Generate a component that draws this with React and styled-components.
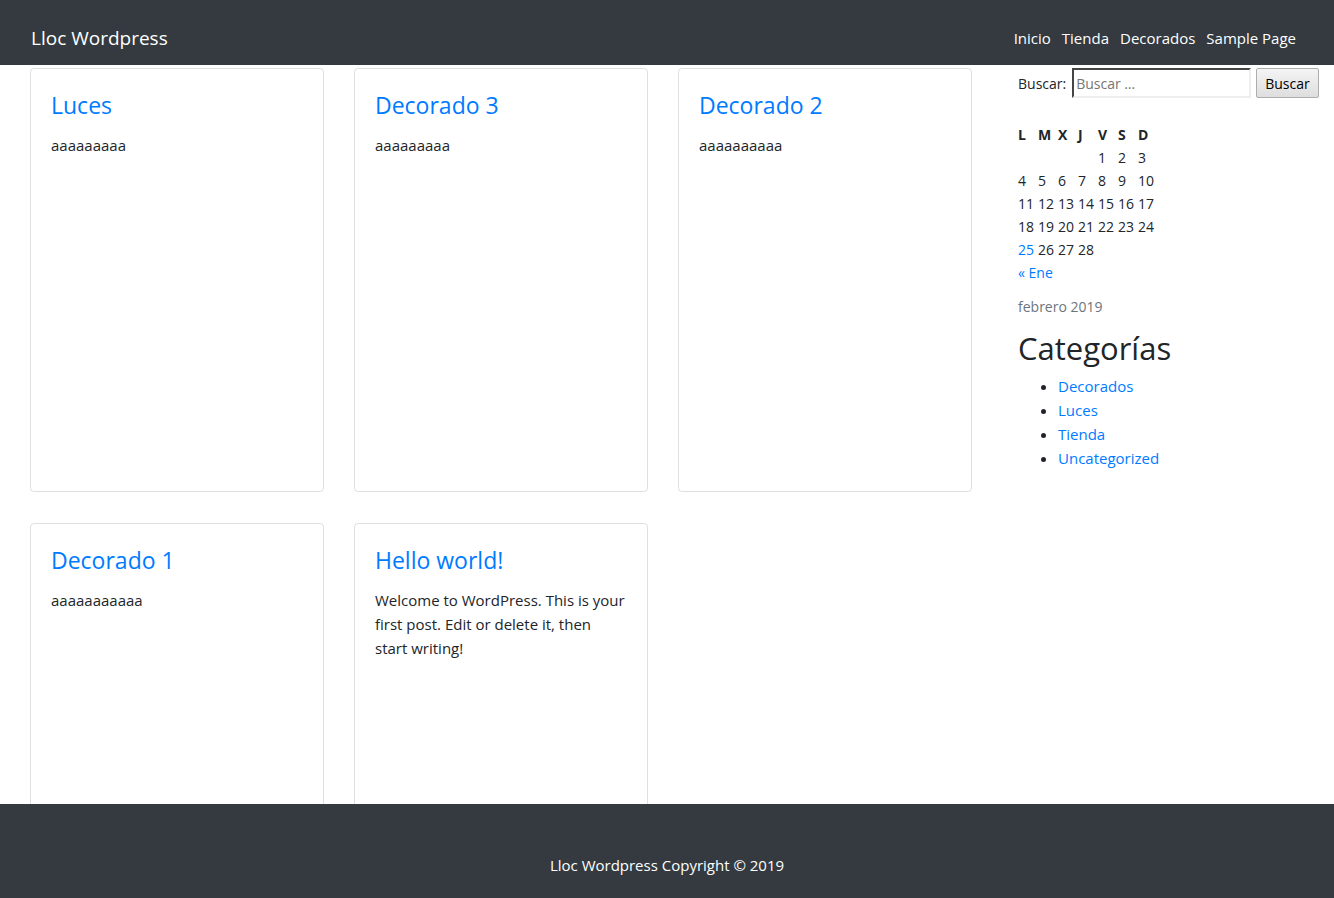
import React from "react";
import styled, { createGlobalStyle } from "styled-components";

const GlobalStyle = createGlobalStyle`
  body {
    margin: 0;
    font-family: "Open Sans", "Noto Sans", sans-serif;
    font-size: 15px;
    line-height: 1.5;
    color: #212529;
    background: #fff;
  }
  a {
    color: #007bff;
    text-decoration: none;
  }
`;

const posts = [
  { title: "Luces", text: "aaaaaaaaa" },
  { title: "Decorado 3", text: "aaaaaaaaa" },
  { title: "Decorado 2", text: "aaaaaaaaaa" },
  { title: "Decorado 1", text: "aaaaaaaaaaa" },
  {
    title: "Hello world!",
    text: "Welcome to WordPress. This is your first post. Edit or delete it, then start writing!",
  },
];

const weeks = [
  ["", "", "", "", "1", "2", "3"],
  ["4", "5", "6", "7", "8", "9", "10"],
  ["11", "12", "13", "14", "15", "16", "17"],
  ["18", "19", "20", "21", "22", "23", "24"],
  ["25", "26", "27", "28", "", "", ""],
];

const App = () => {
  return (
    <>
      <GlobalStyle />
      <Navbar>
        <Brand href="#">Lloc Wordpress</Brand>
        <NavLinks>
          <NavLink href="#">Inicio</NavLink>
          <NavLink href="#">Tienda</NavLink>
          <NavLink href="#">Decorados</NavLink>
          <NavLink href="#">Sample Page</NavLink>
        </NavLinks>
      </Navbar>

      <Page>
        <Posts>
          {posts.map((p) => (
            <Card key={p.title}>
              <CardTitle href="#">{p.title}</CardTitle>
              <CardText>{p.text}</CardText>
            </Card>
          ))}
        </Posts>

        <Sidebar>
          <SearchForm>
            <SearchLabel>Buscar:</SearchLabel>
            <SearchInput placeholder="Buscar …" />
            <SearchButton>Buscar</SearchButton>
          </SearchForm>

          <Calendar>
            <thead>
              <tr>
                {["L", "M", "X", "J", "V", "S", "D"].map((d) => (
                  <Th key={d}>{d}</Th>
                ))}
              </tr>
            </thead>
            <tbody>
              {weeks.map((w, i) => (
                <tr key={i}>
                  {w.map((d, j) => (
                    <Td key={j}>
                      {d === "25" ? <a href="#">{d}</a> : d}
                    </Td>
                  ))}
                </tr>
              ))}
              <tr>
                <Td colSpan={7}>
                  <a href="#">« Ene</a>
                </Td>
              </tr>
            </tbody>
            <Caption>febrero 2019</Caption>
          </Calendar>

          <WidgetTitle>Categorías</WidgetTitle>
          <CatList>
            <li><a href="#">Decorados</a></li>
            <li><a href="#">Luces</a></li>
            <li><a href="#">Tienda</a></li>
            <li><a href="#">Uncategorized</a></li>
          </CatList>
        </Sidebar>
      </Page>

      <Footer>Lloc Wordpress Copyright © 2019</Footer>
    </>
  );
};

export default App;

const Navbar = styled.nav`
  position: fixed;
  top: 0;
  left: 0;
  right: 0;
  height: 65px;
  background: #343a40;
  display: flex;
  align-items: center;
  justify-content: space-between;
  padding: 0 38px 0 31px;
  box-sizing: border-box;
  z-index: 10;
`;

const Brand = styled.a`
  color: #fff !important;
  font-size: 19px;
  padding-top: 12px;
`;

const NavLinks = styled.div`
  display: flex;
  gap: 11px;
  padding-top: 12px;
`;

const NavLink = styled.a`
  color: #fff !important;
  font-size: 15px;
`;

const Page = styled.div`
  display: flex;
  padding: 68px 16px 0 30px;
`;

const Posts = styled.div`
  display: grid;
  grid-template-columns: repeat(3, 294px);
  column-gap: 30px;
  row-gap: 31px;
  align-content: start;
  width: 943px;
`;

const Card = styled.div`
  border: 1px solid rgba(0, 0, 0, 0.125);
  border-radius: 4px;
  min-height: 424px;
  padding: 23px 20px 18px;
  box-sizing: border-box;
`;

const CardTitle = styled.a`
  display: block;
  font-size: 23px;
  line-height: 1.2;
  font-weight: 500;
  margin-bottom: 13px;
`;

const CardText = styled.p`
  margin: 0;
  font-size: 15px;
  line-height: 24px;
`;

const Sidebar = styled.aside`
  margin-left: 46px;
  width: 302px;
`;

const SearchForm = styled.form`
  display: flex;
  align-items: center;
  height: 30px;
`;

const SearchLabel = styled.label`
  font-size: 14px;
  margin-right: 6px;
`;

const SearchInput = styled.input`
  width: 179px;
  height: 30px;
  box-sizing: border-box;
  border: 2px inset #eee;
  border-top-color: #999;
  border-left-color: #999;
  font-family: inherit;
  font-size: 14px;
  padding: 1px 2px;
  &::placeholder {
    color: #757575;
  }
`;

const SearchButton = styled.button`
  margin-left: 5px;
  height: 30px;
  padding: 0 8px;
  font-family: inherit;
  font-size: 14px;
  color: #000;
  background: linear-gradient(#f4f4f4, #dedede);
  border: 1px solid #adadad;
  border-radius: 2px;
`;

const Calendar = styled.table`
  margin-top: 25px;
  border-collapse: collapse;
  caption-side: bottom;
`;

const Th = styled.th`
  width: 20px;
  padding: 0;
  text-align: left;
  font-size: 14px;
  line-height: 23px;
  font-weight: 700;
`;

const Td = styled.td`
  padding: 0;
  text-align: left;
  font-size: 14px;
  line-height: 23px;
`;

const Caption = styled.caption`
  text-align: left;
  color: #6c757d;
  font-size: 14px;
  padding-top: 12px;
`;

const WidgetTitle = styled.h2`
  margin: 13px 0 7px;
  font-size: 31px;
  font-weight: 500;
  line-height: 1.2;
`;

const CatList = styled.ul`
  margin: 0;
  padding-left: 40px;
  font-size: 15px;
  line-height: 24px;
`;

const Footer = styled.footer`
  position: fixed;
  left: 0;
  right: 0;
  bottom: 0;
  height: 94px;
  background: #343a40;
  color: #fff;
  font-size: 15px;
  display: flex;
  justify-content: center;
  align-items: center;
  padding-top: 28px;
  box-sizing: border-box;
  z-index: 10;
`;
